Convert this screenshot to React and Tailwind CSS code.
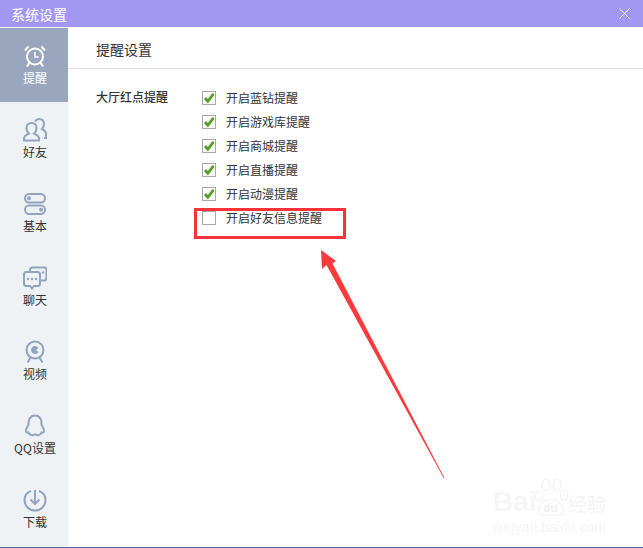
const ICON = 'fill-none stroke-[#93a2bd]';

const AlarmIcon = () => (
  <svg width="24" height="24" viewBox="0 0 24 24" className="fill-none stroke-white" strokeWidth="2">
    <circle cx="12" cy="12.500" r="8" />
    <path d="M12 8v5h3.500" strokeWidth="1.600" />
    <path d="M2 6.500 5.500 2.500M22 6.500l-3.500-4M6.500 18.500l-2.500 4M17.500 18.500l2.500 4" />
  </svg>
);

const FriendsIcon = () => (
  <svg width="24" height="24" viewBox="0 0 24 24" className={ICON} strokeWidth="2">
    <path d="M1 22.500v-2c0-3 3-4 5-5-2-1.500-2.500-3.500-2.500-5.500 0-3 2-5 5-5s5 2 5 5c0 2-.5 4-2.500 5.500 2 1 5 2 5 5v2z" />
    <path d="M12 3.500C13 1.800 14.500 1 16 1c3 0 5 2 5 5 0 2-.5 3.500-2 5 2 1 4 2 4 4.500V20h-2" />
  </svg>
);

const SwitchIcon = () => (
  <svg width="24" height="24" viewBox="0 0 24 24" className={ICON} strokeWidth="2">
    <rect x="2" y="2" width="20" height="8.500" rx="4.200" />
    <rect x="2" y="13.500" width="20" height="8.500" rx="4.200" />
    <circle cx="6" cy="6.200" r="2" className="fill-[#93a2bd] stroke-none" />
    <circle cx="18" cy="17.800" r="2" className="fill-[#93a2bd] stroke-none" />
  </svg>
);

const ChatIcon = () => (
  <svg width="24" height="24" viewBox="0 0 24 24" className={ICON} strokeWidth="2">
    <path d="M3.500 6h11c1.500 0 2.500 1 2.500 2.500v9c0 1.500-1 2.500-2.500 2.500H11l-2 2.500L7 20H3.500C2 20 1 19 1 17.500v-9C1 7 2 6 3.500 6z" />
    <path d="M7 5.500V4c0-1.500 1-2.500 2.500-2.500h12C23 1.500 23.500 2.500 23.500 4v8c0 1.500-1 2.500-2.500 2.500h-3.500" />
    <path d="M5 13h.1M9 13h.1M13 13h.1M20 6.500h.1" strokeWidth="2.400" strokeLinecap="round" />
  </svg>
);

const CameraIcon = () => (
  <svg width="24" height="24" viewBox="0 0 24 24" className={ICON} strokeWidth="2">
    <circle cx="12" cy="10" r="8.500" />
    <path d="M12 6a4 4 0 1 0 3.500 6l-2.500-2 2.500-2A4 4 0 0 0 12 6z" className="fill-[#93a2bd] stroke-none" />
    <path d="M7.500 17.500 4.500 22.500M16.500 17.500l3 5" />
  </svg>
);

const PenguinIcon = () => (
  <svg width="24" height="24" viewBox="0 0 24 24" className={ICON} strokeWidth="2">
    <path d="M5.500 10C5.500 4.500 8 1.500 12 1.500s6.500 3 6.500 8.500c0 2 2.500 4 2.500 7 0 1.500-1 2-2.500 1.500-1 2.500-3.500 3-4.500 2.500-.8-.4-1.200-.5-2-.5s-1.200.1-2 .5c-1 .5-3.500 0-4.500-2.500C4 19 3 18.500 3 17c0-3 2.500-5 2.500-7z" />
  </svg>
);

const DownloadIcon = () => (
  <svg width="24" height="24" viewBox="0 0 24 24" className={ICON} strokeWidth="2">
    <path d="M8 3C4 4.500 1.500 8 1.500 12a10.500 10.500 0 0 0 21 0c0-4-2.500-7.500-6.500-9" />
    <path d="M12 2v14M7.500 11.500 12 16l4.500-4.500" />
  </svg>
);

const navItems = [
  { label: '提醒', icon: AlarmIcon, active: true },
  { label: '好友', icon: FriendsIcon },
  { label: '基本', icon: SwitchIcon },
  { label: '聊天', icon: ChatIcon },
  { label: '视频', icon: CameraIcon },
  { label: 'QQ设置', icon: PenguinIcon },
  { label: '下载', icon: DownloadIcon },
];

const options = [
  { label: '开启蓝钻提醒', checked: true },
  { label: '开启游戏库提醒', checked: true },
  { label: '开启商城提醒', checked: true },
  { label: '开启直播提醒', checked: true },
  { label: '开启动漫提醒', checked: true },
  { label: '开启好友信息提醒', checked: false },
];

function Checkbox({ checked }) {
  return (
    <span className="relative w-[14px] h-[14px] bg-white border border-[#a8a8a8]">
      {checked && (
        <svg width="14" height="14" viewBox="0 0 14 14" className="absolute -left-px -top-px">
          <path d="M3 7 5.800 10.300 11.500 2.800" fill="none" stroke="#55a024" strokeWidth="2.800" />
        </svg>
      )}
    </span>
  );
}

export default function App() {
  return (
    <div className="relative w-[643px] h-[548px] overflow-hidden bg-white font-['Noto_Sans_CJK_SC','Liberation_Sans',sans-serif]">
      {/* Title bar */}
      <div className="flex items-center justify-between h-[27px] pl-[11px] pr-[13px] bg-[#a298f4] text-white text-sm">
        <span>系统设置</span>
        <svg width="11" height="11" viewBox="0 0 11 11" stroke="white" strokeWidth="1">
          <path d="M.5.500l10 10M10.500.500l-10 10" />
        </svg>
      </div>

      <div className="flex h-[520px] mt-px border-b border-[#4a6cb4]">
        {/* Sidebar */}
        <div className="w-[68px] bg-[#eff2f5]">
          {navItems.map(({ label, icon: Icon, active }) => (
            <div
              key={label}
              className={`flex flex-col items-center h-[74px] pt-4 pl-[2px] text-xs leading-[16px] ${active ? 'bg-[#9aa6bd] text-white' : 'text-[#333333]'}`}
            >
              <Icon />
              <span className="mt-[2px]">{label}</span>
            </div>
          ))}
        </div>

        {/* Content */}
        <div className="flex-1">
          <div className="h-[41px] pl-7 pt-[11px] border-b border-[#e2e2e2] text-sm leading-[20px] text-[#333333]">
            提醒设置
          </div>
          <div className="flex pl-7 pt-[19px]">
            <div className="w-[106px] text-xs leading-[18px] font-medium text-[#333333]">大厅红点提醒</div>
            <div className="flex flex-col gap-[6px] pt-[1px]">
              {options.map((option) => (
                <label key={option.label} className="flex items-center gap-[10px] h-[18px] text-xs text-[#333333]">
                  <Checkbox checked={option.checked} />
                  {option.label}
                </label>
              ))}
            </div>
          </div>
        </div>
      </div>

      {/* Red annotation */}
      <div className="absolute left-[194px] top-[208px] w-[152px] h-[31px] border-[3px] border-[#f5333a]" />
      <svg width="643" height="548" className="absolute left-0 top-0 pointer-events-none">
        <polygon points="321,250 336,261 332.500,263.500 444.500,478 443.800,478.300 326.500,265 322,269" fill="#fb3a3c" />
      </svg>

      {/* Watermark */}
      <div className="absolute left-[493px] top-[478px] text-[#f6f6f6]">
        <div className="flex items-end h-[39px]">
          <span className="w-[41px] text-[28px] leading-[30px] font-bold font-['Liberation_Sans',sans-serif]">Bai</span>
          <svg width="34" height="39" viewBox="0 0 34 39" fill="none" stroke="#f0f0f0" strokeWidth="1.200">
            <ellipse cx="5" cy="18" rx="3.500" ry="5" />
            <ellipse cx="12" cy="7" rx="4" ry="6" />
            <ellipse cx="23" cy="7" rx="4" ry="6" />
            <ellipse cx="30" cy="17" rx="3.500" ry="5" />
            <path d="M6 37c-5-8 5-16 11-16s16 8 11 16z" />
            <text x="9" y="34" fontSize="12" fontWeight="700" fill="#f0f0f0" stroke="none" fontFamily="Liberation Sans, sans-serif">du</text>
          </svg>
          <span className="text-[19px] leading-[26px] font-bold">经验</span>
        </div>
        <div className="mt-[3px] text-[14px] leading-[14px] font-['Liberation_Sans',sans-serif]">jingyan.baidu.com</div>
      </div>
    </div>
  );
}
